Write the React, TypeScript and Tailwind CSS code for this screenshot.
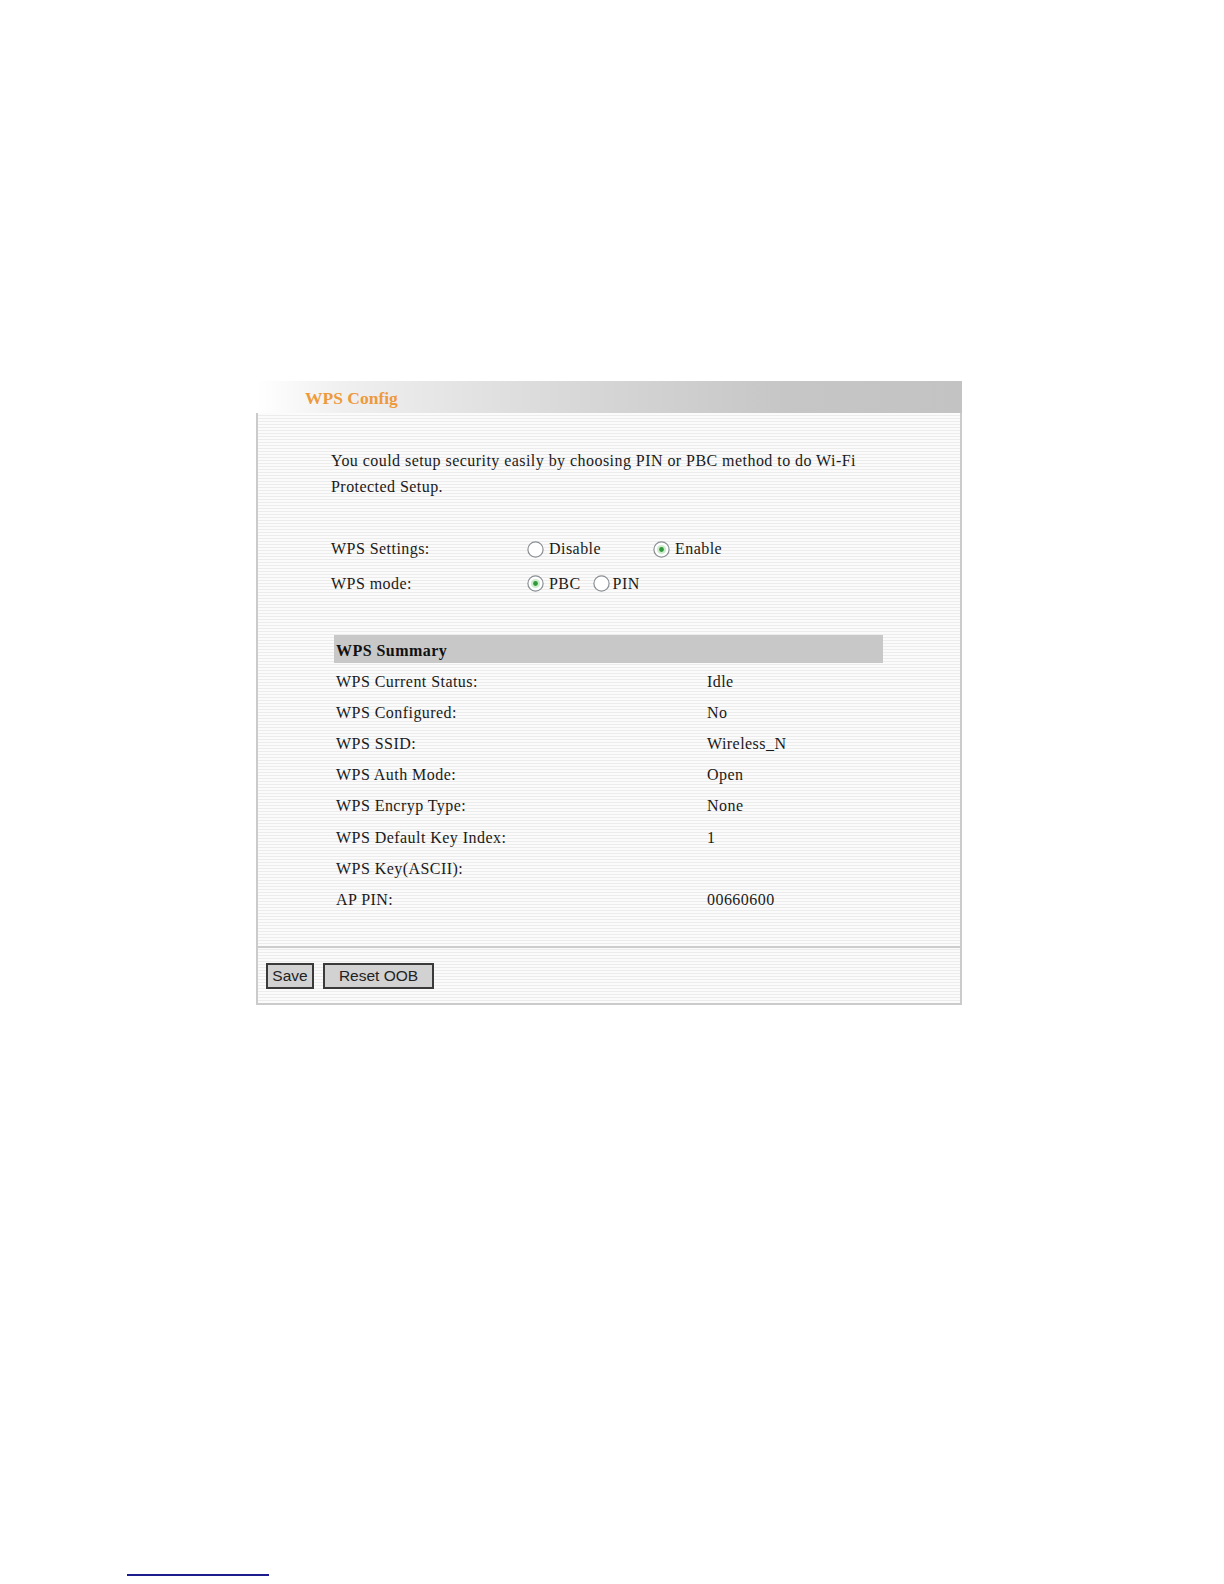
import React from "react";

function Radio({ checked }: { checked: boolean }) {
  return (
    <svg width="17" height="17" viewBox="0 0 17 17" className="shrink-0">
      <circle cx="8.5" cy="8.5" r="7.6" fill="#ffffff" stroke="#8a8f94" strokeWidth="1.2" />
      {checked && <circle cx="8.5" cy="8.5" r="4.6" fill="#cfeccf" />}
      {checked && <circle cx="8.5" cy="8.5" r="2.4" fill="#2f9a3a" />}
    </svg>
  );
}

const rows: [string, string][] = [
  ["WPS Current Status:", "Idle"],
  ["WPS Configured:", "No"],
  ["WPS SSID:", "Wireless_N"],
  ["WPS Auth Mode:", "Open"],
  ["WPS Encryp Type:", "None"],
  ["WPS Default Key Index:", "1"],
  ["WPS Key(ASCII):", ""],
  ["AP PIN:", "00660600"],
];

export default function App() {
  return (
    <div className="relative w-[1224px] h-[1584px] bg-white overflow-hidden">
      <div className="pt-[381px] pl-[256px]">
        <div className="w-[706px] font-['Liberation_Serif',serif] text-[16px] tracking-[0.45px] text-[#1a1a1a]">
          {/* header */}
          <div className="h-[32px] flex items-center pl-[49px] pt-[3px] bg-[linear-gradient(to_right,#ffffff_0%,#f0f0f0_12%,#d8d8d8_45%,#c6c6c6_75%,#c3c3c3_100%)]">
            <span className="font-bold text-[17.5px] tracking-normal text-[#ee9a3c] leading-none">WPS Config</span>
          </div>
          {/* body */}
          <div className="border-l-2 border-r-2 border-b-2 border-[#cbcbcb] bg-[image:repeating-linear-gradient(to_bottom,#fbfbfb_0px,#fbfbfb_2px,#ececec_2px,#ececec_3px)]">
            <div className="pl-[73px] pt-[35px]">
              <p className="leading-[26px]">
                You could setup security easily by choosing PIN or PBC method to do Wi-Fi
                <br />
                Protected Setup.
              </p>
              <div className="mt-[32px] flex items-center h-[34px]">
                <span className="w-[196px]">WPS Settings:</span>
                <div className="flex items-center w-[126px] gap-[5px]">
                  <Radio checked={false} />
                  <span>Disable</span>
                </div>
                <div className="flex items-center gap-[5px]">
                  <Radio checked={true} />
                  <span>Enable</span>
                </div>
              </div>
              <div className="flex items-center h-[35px]">
                <span className="w-[196px]">WPS mode:</span>
                <div className="flex items-center gap-[5px]">
                  <Radio checked={true} />
                  <span>PBC</span>
                </div>
                <div className="flex items-center gap-[3px] ml-[12px]">
                  <Radio checked={false} />
                  <span>PIN</span>
                </div>
              </div>
              <div className="ml-[3px] mt-[34px] w-[549px]">
                <div className="h-[28px] bg-[#c8c8c8] flex items-center pl-[2px] pt-[3px] font-bold text-[#111]">
                  WPS Summary
                </div>
                <div className="mt-[3px]">
                  {rows.map(([k, v]) => (
                    <div key={k} className="flex items-center h-[31.2px] pl-[2px]">
                      <span className="w-[371px]">{k}</span>
                      <span>{v}</span>
                    </div>
                  ))}
                </div>
              </div>
            </div>
            <div className="mt-[30px] h-[2px] bg-[#cdcdcd]" />
            <div className="flex items-center gap-[9px] pl-[8px] pt-[15px] pb-[14px] font-['Liberation_Sans',sans-serif] text-[15.5px] tracking-normal">
              <div className="w-[48px] h-[26px] border-2 border-[#3a3a3a] bg-[#d2d2d2] flex items-center justify-center text-[#222]">
                Save
              </div>
              <div className="w-[111px] h-[26px] border-2 border-[#3a3a3a] bg-[#d2d2d2] flex items-center justify-center text-[#222]">
                Reset OOB
              </div>
            </div>
          </div>
        </div>
      </div>
      <div className="mt-[569px] ml-[127px] w-[142px] h-[2px] bg-[#1c1c8e]" />
    </div>
  );
}
